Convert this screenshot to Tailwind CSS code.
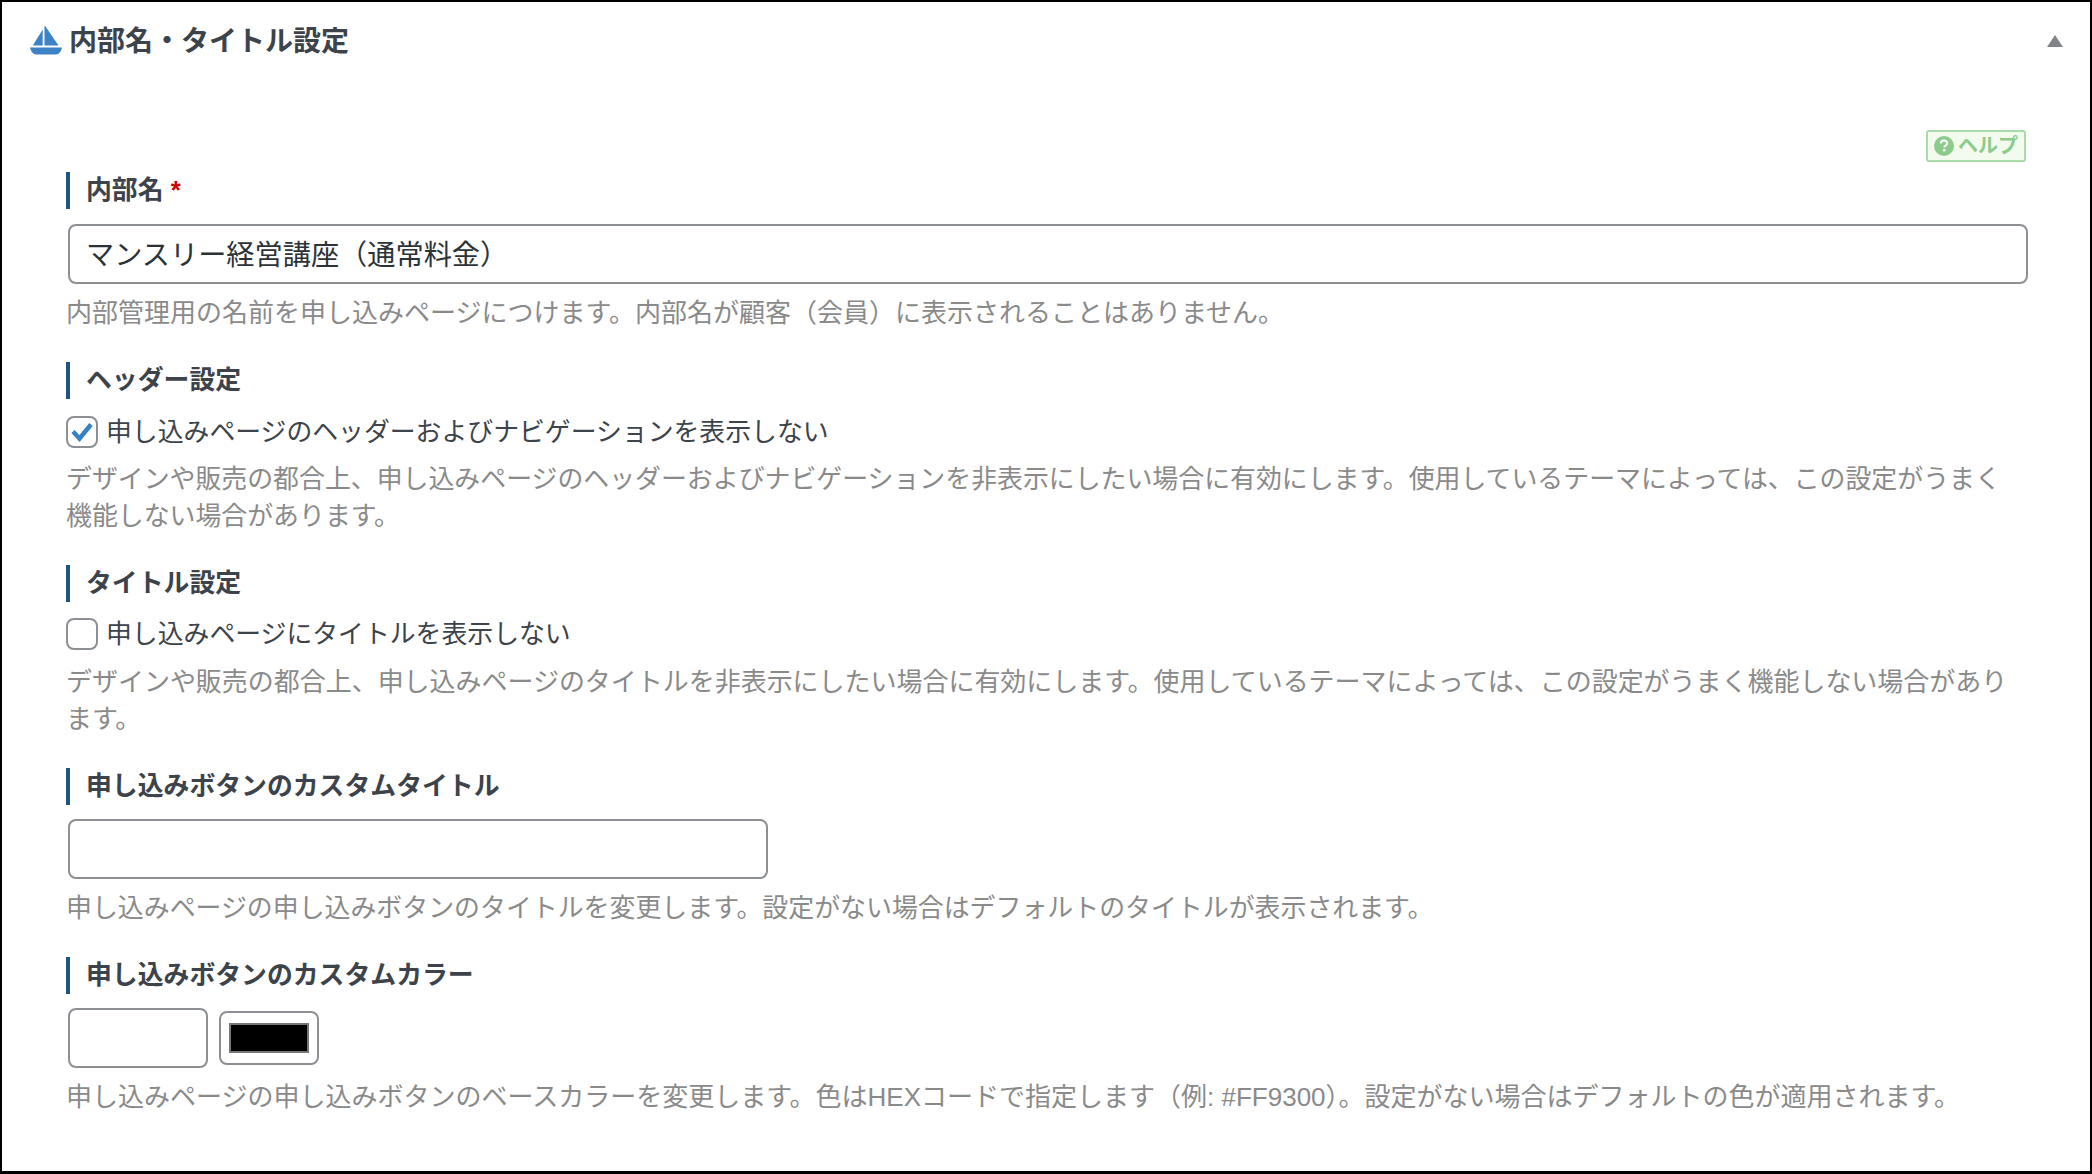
<!DOCTYPE html>
<html lang="ja">
  <head>
    <meta charset="UTF-8" />
    <title>内部名・タイトル設定</title>
    <script src="https://cdn.jsdelivr.net/npm/@tailwindcss/browser@4"></script>
  </head>
  <body class="bg-white font-['Liberation_Sans','Noto_Sans_CJK_JP',sans-serif] [text-spacing-trim:space-all]">
    <div class="w-[2092px] h-[1174px] border-2 border-b-[3px] border-black overflow-hidden text-[#3c434a]">
      <header class="h-[78px] pl-[28px] pr-[27px] flex items-center">
        <svg class="w-[32px] h-[30px] shrink-0" viewBox="0 0 32 30" fill="#3d82c4">
          <path d="M12.7 3.5 V19.5 H2.8 Z" />
          <path d="M14.5 0 L15.2 0 L28.5 19.5 H14.5 Z" />
          <path d="M0 21.5 H32 C31 25.5 29 28.5 26 28.5 H6 C3 28.5 1 25.5 0 21.5 Z" />
        </svg>
        <h2 class="ml-[7px] mt-[2px] text-[28px] leading-[38px] font-bold">内部名・タイトル設定</h2>
        <svg class="ml-auto w-[16px] h-[12px]" viewBox="0 0 16 12" fill="#80848a"><path d="M8 0 L16 12 H0 Z" /></svg>
      </header>

      <main class="pl-[64px] pr-[62px]">
        <div class="flex justify-end h-[32px] mt-[50px] pr-[2px]">
          <a class="w-[100px] h-[32px] flex items-center justify-center gap-[4px] border-2 border-[#aadaaa] rounded-[3px] bg-[#f2fbee] text-[#8ccb8c] text-[20px] leading-[28px] font-bold">
            <svg class="w-[20px] h-[20px]" viewBox="0 0 20 20">
              <circle cx="10" cy="10" r="10" fill="#8ccb8c" />
              <path d="M6.8 7.6 C6.8 5.7 8.2 4.6 10 4.6 C11.8 4.6 13.2 5.7 13.2 7.3 C13.2 9.3 10.3 9.5 10.3 11.6" fill="none" stroke="#fff" stroke-width="2" />
              <rect x="9.2" y="13" width="2.2" height="2.4" fill="#fff" />
            </svg>
            ヘルプ
          </a>
        </div>

        <section class="mt-[10px]">
          <h3 class="h-[37px] border-l-4 border-[#1d5480] pl-[16px] text-[25.85px] leading-[37px] font-bold">内部名 <span class="text-[#cc0000]">*</span></h3>
          <input type="text" value="マンスリー経営講座（通常料金）" class="block mt-[15px] ml-[2px] w-[1960px] h-[60px] px-[16px] pb-[3px] border-2 border-[#8c8f94] rounded-[8px] text-[28.2px] text-[#2c3338] outline-none" />
          <p class="mt-[11px] text-[26px] leading-[36px] text-[#8a8a8a]">内部管理用の名前を申し込みページにつけます。内部名が顧客（会員）に表示されることはありません。</p>
        </section>

        <section class="mt-[31px]">
          <h3 class="h-[37px] border-l-4 border-[#1d5480] pl-[16px] text-[25.85px] leading-[37px] font-bold">ヘッダー設定</h3>
          <label class="mt-[15px] flex items-center h-[36px] text-[25.85px] leading-[36px]">
            <span class="w-[32px] h-[32px] flex items-center justify-center border-2 border-[#8c8f94] rounded-[8px] bg-white">
              <svg class="w-[22px] h-[20px]" viewBox="0 0 22 20" fill="none" stroke="#3582c4" stroke-width="4.5"><path d="M2 9.5 L8.5 16.5 L20 2.5" /></svg>
            </span>
            <span class="ml-[8px]">申し込みページのヘッダーおよびナビゲーションを表示しない</span>
          </label>
          <p class="mt-[11px] text-[25.9px] leading-[36.5px] text-[#8a8a8a] whitespace-nowrap">デザインや販売の都合上、申し込みページのヘッダーおよびナビゲーションを非表示にしたい場合に有効にします。使用しているテーマによっては、この設定がうまく<br />機能しない場合があります。</p>
        </section>

        <section class="mt-[31px]">
          <h3 class="h-[37px] border-l-4 border-[#1d5480] pl-[16px] text-[25.85px] leading-[37px] font-bold">タイトル設定</h3>
          <label class="mt-[14px] flex items-center h-[36px] text-[25.85px] leading-[36px]">
            <span class="w-[32px] h-[32px] border-2 border-[#8c8f94] rounded-[8px] bg-white"></span>
            <span class="ml-[8px]">申し込みページにタイトルを表示しない</span>
          </label>
          <p class="mt-[12px] text-[25.97px] leading-[36.5px] text-[#8a8a8a] whitespace-nowrap">デザインや販売の都合上、申し込みページのタイトルを非表示にしたい場合に有効にします。使用しているテーマによっては、この設定がうまく機能しない場合があり<br />ます。</p>
        </section>

        <section class="mt-[31px]">
          <h3 class="h-[37px] border-l-4 border-[#1d5480] pl-[16px] text-[25.85px] leading-[37px] font-bold">申し込みボタンのカスタムタイトル</h3>
          <input type="text" class="block mt-[14px] ml-[2px] w-[700px] h-[60px] px-[16px] border-2 border-[#8c8f94] rounded-[8px] outline-none" />
          <p class="mt-[11px] text-[25.92px] leading-[36px] text-[#8a8a8a]">申し込みページの申し込みボタンのタイトルを変更します。設定がない場合はデフォルトのタイトルが表示されます。</p>
        </section>

        <section class="mt-[31px]">
          <h3 class="h-[37px] border-l-4 border-[#1d5480] pl-[16px] text-[25.85px] leading-[37px] font-bold">申し込みボタンのカスタムカラー</h3>
          <div class="mt-[14px] ml-[2px] flex items-center gap-[11px]">
            <input type="text" class="block w-[140px] h-[60px] px-[16px] border-2 border-[#8c8f94] rounded-[8px] outline-none" />
            <div class="w-[100px] h-[54px] flex items-center justify-center border-2 border-[#8c8f94] rounded-[8px]">
              <div class="w-[80px] h-[30px] bg-black border-2 border-[#767676]"></div>
            </div>
          </div>
          <p class="mt-[11px] text-[26px] leading-[36px] text-[#8a8a8a] [text-spacing-trim:normal]">申し込みページの申し込みボタンのベースカラーを変更します。色はHEXコードで指定します（例: #FF9300）。設定がない場合はデフォルトの色が適用されます。</p>
        </section>
      </main>
    </div>
  </body>
</html>
